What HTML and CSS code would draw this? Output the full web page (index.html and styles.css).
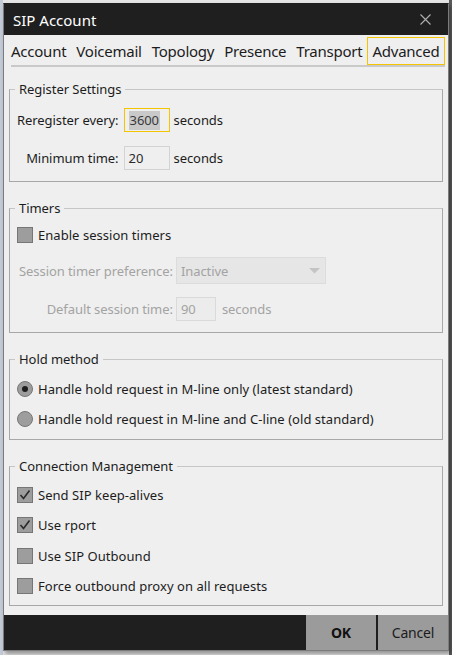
FILE: index.html
```html
<!DOCTYPE html>
<html>
<head>
<meta charset="utf-8">
<link rel="stylesheet" href="styles.css">
</head>
<body>
<div class="dialog">
  <div class="titlebar">
    <span class="title">SIP Account</span>
    <svg class="close" width="11" height="11" viewBox="0 0 11 11"><path d="M0.5 0.5 L10.5 10.5 M10.5 0.5 L0.5 10.5" stroke="#b0b0b0" stroke-width="1.1" fill="none"/></svg>
  </div>
  <div class="tabs">
    <div class="tabrow">
      <span class="tab">Account</span>
      <span class="tab">Voicemail</span>
      <span class="tab">Topology</span>
      <span class="tab">Presence</span>
      <span class="tab">Transport</span>
      <span class="tab active">Advanced</span>
    </div>
    <div class="tabline"></div>
  </div>
  <div class="content">
    <fieldset class="group g1">
      <legend>Register Settings</legend>
      <div class="form form-reg">
        <span class="lbl">Reregister every:</span>
        <div class="inline">
          <div class="field focus w46"><span class="sel">3600</span></div>
          <span class="unit">seconds</span>
        </div>
        <span class="lbl">Minimum time:</span>
        <div class="inline">
          <div class="field w46">20</div>
          <span class="unit">seconds</span>
        </div>
      </div>
    </fieldset>

    <fieldset class="group g2">
      <legend>Timers</legend>
      <div class="check">
        <span class="box"></span><span>Enable session timers</span>
      </div>
      <div class="form form-timer">
        <span class="lbl dis">Session timer preference:</span>
        <div class="combo dis"><span>Inactive</span><svg width="11" height="6" viewBox="0 0 11 6"><path d="M0 0 H11 L5.5 5.5 Z" fill="#c4c4c4"/></svg></div>
        <span class="lbl dis">Default session time:</span>
        <div class="inline">
          <div class="field disfield w40">90</div>
          <span class="unit dis">seconds</span>
        </div>
      </div>
    </fieldset>

    <fieldset class="group g3">
      <legend>Hold method</legend>
      <div class="check">
        <span class="radio on"></span><span>Handle hold request in M-line only (latest standard)</span>
      </div>
      <div class="check">
        <span class="radio"></span><span>Handle hold request in M-line and C-line (old standard)</span>
      </div>
    </fieldset>

    <fieldset class="group g4">
      <legend>Connection Management</legend>
      <div class="check">
        <span class="box"><svg width="14" height="14" viewBox="0 0 14 14"><path d="M2.5 7 L5.5 10.5 L11.5 2.5" stroke="#2a2a2a" stroke-width="1.6" fill="none"/></svg></span><span>Send SIP keep-alives</span>
      </div>
      <div class="check">
        <span class="box"><svg width="14" height="14" viewBox="0 0 14 14"><path d="M2.5 7 L5.5 10.5 L11.5 2.5" stroke="#2a2a2a" stroke-width="1.6" fill="none"/></svg></span><span>Use rport</span>
      </div>
      <div class="check">
        <span class="box"></span><span>Use SIP Outbound</span>
      </div>
      <div class="check">
        <span class="box"></span><span>Force outbound proxy on all requests</span>
      </div>
    </fieldset>
  </div>
  <div class="footer">
    <button class="btn ok">OK</button>
    <button class="btn">Cancel</button>
  </div>
</div>
</body>
</html>
```
FILE: styles.css
```css
html, body {
  margin: 0;
  padding: 0;
}
body {
  width: 452px;
  height: 655px;
  background: linear-gradient(to right, #c4cbd8 0, #c4cbd8 3px, #e4e4e4 3px, #e4e4e4 449px, #5a5a5a 449px);
  font-family: "Noto Sans", "Open Sans", sans-serif;
  font-size: 13px;
  color: #1c1c1c;
  overflow: hidden;
  padding-top: 3px;
  padding-left: 3px;
  box-sizing: border-box;
}
.dialog {
  width: 446px;
  height: 648px;
  box-sizing: border-box;
  border: 1px solid #7c7c7c;
  border-top-color: #1f1f1f;
  background: #efefef;
  display: flex;
  flex-direction: column;
  box-shadow: 2px 3px 4px rgba(0, 0, 0, 0.35);
}
.titlebar {
  height: 31px;
  background: #1f1f1f;
  display: flex;
  align-items: center;
  justify-content: space-between;
  padding: 0 17px 0 9px;
  flex: none;
}
.title {
  color: #ffffff;
  font-size: 15px;
  line-height: 20px;
  padding-top: 1px;
}
.close {
  display: block;
}
.tabs {
  height: 32px;
  flex: none;
  display: flex;
  flex-direction: column;
  padding-top: 2px;
  box-sizing: border-box;
}
.tabrow {
  display: flex;
  padding-left: 2px;
  height: 28px;
}
.tab {
  font-size: 15px;
  letter-spacing: -0.24px;
  padding: 0 4px;
  border: 1px solid transparent;
  line-height: 26px;
  color: #1c1c1c;
}
.tab.active {
  border-color: #f5c400;
}
.tabline {
  height: 2px;
  background: #c9c9c9;
  margin: 0 3px 0 7px;
}
.content {
  flex: 1;
  padding: 13px 5px 0;
  display: flex;
  flex-direction: column;
  gap: 17px;
}
.group {
  margin: 0;
  min-width: 0;
  border: 1px solid #a8a8a8;
  border-top-color: #c6c6c6;
  padding: 0 7px;
  letter-spacing: 0.04px;
}
.group legend {
  padding: 0 4px;
  margin-left: -2px;
  line-height: 18px;
  font-size: 13px;
  letter-spacing: -0.05px;
}
.g1 { padding-top: 10px; padding-bottom: 11px; }
.g2 { padding-top: 10px; padding-bottom: 11px; }
.g3 { padding-top: 13px; padding-bottom: 12px; display: flex; flex-direction: column; gap: 14px; }
.g4 { padding-top: 12px; padding-bottom: 11px; display: flex; flex-direction: column; gap: 14.3px; }

.form {
  display: grid;
  grid-template-columns: auto 1fr;
  align-items: center;
  letter-spacing: -0.07px;
}
.form-reg {
  row-gap: 14px;
  column-gap: 5px;
}
.form-timer {
  row-gap: 13px;
  column-gap: 3px;
  margin-top: 14px;
  padding-left: 2px;
}
.inline {
  display: flex;
  align-items: center;
  gap: 4px;
}
.lbl {
  justify-self: end;
}
.dis {
  color: #a3a3a3;
}
.field {
  height: 24px;
  box-sizing: border-box;
  border: 1px solid #d3d3d3;
  padding-left: 4px;
  line-height: 22px;
  color: #2a2a2a;
  display: flex;
  align-items: center;
}
.w46 { width: 46px; }
.w40 { width: 40px; }
.field.focus {
  border-color: #f5c400;
}
.sel {
  background: #c9c9c9;
  color: #3a3a3a;
  line-height: 19px;
  padding: 0 1px;
}
.field.disfield {
  color: #a3a3a3;
  border-color: #dadada;
  background: #ececec;
}
.form-timer .inline { gap: 6px; }
.combo {
  width: 150px;
  height: 27px;
  box-sizing: border-box;
  border: 1px solid #dcdcdc;
  background: #e6e6e6;
  display: flex;
  align-items: center;
  justify-content: space-between;
  padding: 0 5px 0 4px;
}
.check {
  display: flex;
  align-items: center;
  height: 16px;
  gap: 5px;
  line-height: 16px;
  white-space: nowrap;
}
.box {
  width: 16px;
  height: 16px;
  box-sizing: border-box;
  border: 1px solid #767676;
  background: #9d9d9d;
  flex: none;
  display: flex;
  align-items: center;
  justify-content: center;
}
.box svg { display: block; }
.radio {
  width: 16px;
  height: 16px;
  box-sizing: border-box;
  border: 1px solid #767676;
  border-radius: 50%;
  background: #9d9d9d;
  flex: none;
  display: flex;
  align-items: center;
  justify-content: center;
}
.radio.on::after {
  content: "";
  width: 6px;
  height: 6px;
  border-radius: 50%;
  background: #1e1e1e;
}
.footer {
  height: 35px;
  flex: none;
  background: #1f1f1f;
  display: flex;
  justify-content: flex-end;
  gap: 2px;
}
.btn {
  width: 70px;
  height: 35px;
  border: none;
  margin: 0;
  padding: 0;
  background: #9b9b9b;
  font-family: "Noto Sans", "Open Sans", sans-serif;
  font-size: 14px;
  letter-spacing: -0.2px;
  color: #1c1c1c;
}
.btn.ok {
  font-weight: bold;
  color: #111111;
}
```
